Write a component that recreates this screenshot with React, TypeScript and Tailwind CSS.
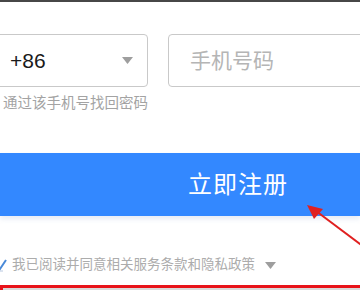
import React from 'react';

const cjk = "font-['Liberation_Sans','Noto_Sans_CJK_SC',sans-serif]";

const Caret = ({ className = '' }: { className?: string }) => (
  <svg width="11" height="7" viewBox="0 0 11 7" className={className}>
    <path d="M0 0 H11 L5.5 7 Z" fill="#9e9e9e" />
  </svg>
);

export default function App() {
  return (
    <div className={`relative w-[360px] h-[290px] overflow-hidden bg-white ${cjk}`}>
      <div className="h-[2px] bg-[#474747]" />

      {/* phone row */}
      <div className="flex gap-[20px] mt-[32px] -ml-[12px]">
        <div className="w-[160px] h-[53px] shrink-0 rounded-[4px] border border-[#c9c9c9] flex items-center justify-between pl-[21px] pr-[14px]">
          <span className="text-[21px] text-[#1a1a1a]">+86</span>
          <Caret />
        </div>
        <div className="w-[220px] h-[53px] shrink-0 rounded-[4px] border border-[#c9c9c9] flex items-center pl-[21px]">
          <span className="text-[21px] text-[#b5b5b5]">手机号码</span>
        </div>
      </div>

      <div className="mt-[6px] ml-[3px] text-[14.5px] leading-[20px] text-[#a3a3a3]">通过该手机号找回密码</div>

      {/* submit */}
      <div className="mt-[40px] h-[63px] bg-[#3388ff] flex items-center pl-[188px] shadow-[0_3px_5px_rgba(120,150,200,0.18)]">
        <span className="text-[24px] text-white tracking-[1px]">立即注册</span>
      </div>

      {/* agreement */}
      <div className="mt-[39px] flex items-center h-[20px]">
        <svg width="12" height="14" viewBox="0 0 12 14" className="-ml-[4px] mr-[4px]">
          <path d="M1 8 L4 11 L10 2" stroke="#4a8ad8" strokeWidth="2" fill="none" />
          <path d="M0 4 V13 H7" stroke="#b8c8e0" strokeWidth="1" fill="none" />
        </svg>
        <span className="text-[13.5px] text-[#acacac]">我已阅读并同意相关服务条款和隐私政策</span>
        <Caret className="ml-[10px]" />
      </div>

      {/* highlight box */}
      <div className="mt-[10px] h-[40px] border-[3px] border-[#e8131a] bg-[#d9d9d9] -mr-[10px]" />

      {/* annotation arrow */}
      <svg className="absolute left-0 top-0" width="360" height="290" viewBox="0 0 360 290">
        <line x1="316" y1="211" x2="364" y2="247" stroke="#e02020" strokeWidth="2" />
        <path d="M307 205 L323 209 L314 219 Z" fill="#e02020" />
      </svg>
    </div>
  );
}
